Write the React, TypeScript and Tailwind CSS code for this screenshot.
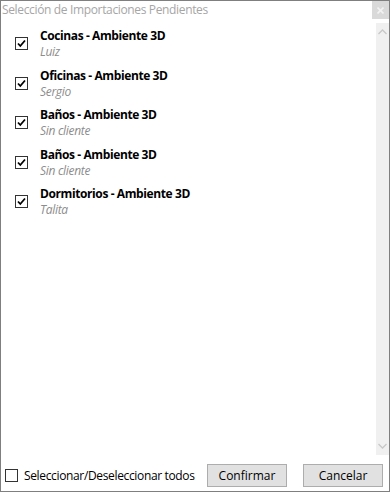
import React from "react";

const items = [
  { title: "Cocinas - Ambiente 3D", sub: "Luiz" },
  { title: "Oficinas - Ambiente 3D", sub: "Sergio" },
  { title: "Baños - Ambiente 3D", sub: "Sin cliente" },
  { title: "Baños - Ambiente 3D", sub: "Sin cliente" },
  { title: "Dormitorios - Ambiente 3D", sub: "Talita" },
];

function Check({ checked }: { checked: boolean }) {
  return (
    <div className="w-[13px] h-[13px] border border-[#333333] bg-white flex items-center justify-center shrink-0">
      {checked && (
        <svg width="11" height="11" viewBox="0 0 11 11">
          <path d="M2 5.5 L4.3 8 L9 2.5" stroke="#000" strokeWidth="1.8" fill="none" />
        </svg>
      )}
    </div>
  );
}

export default function App() {
  return (
    <div
      className="w-[390px] h-[492px] border border-[#7f7f7f] bg-white flex flex-col text-[12px]"
      style={{ fontFamily: '"Open Sans", "Noto Sans", sans-serif' }}
    >
      <div className="flex h-[18px] shrink-0">
        <div className="flex-1 pl-[1px] text-[#a6a6a6] leading-[18px] tracking-[-0.35px]">
          Selección de Importaciones Pendientes
        </div>
        <div className="w-[17px] h-[18px] bg-[#d9d9d9] flex items-center justify-center">
          <svg width="7" height="7" viewBox="0 0 7 7">
            <path d="M0.5 0.5 L6.5 6.5 M6.5 0.5 L0.5 6.5" stroke="#f2f2f2" strokeWidth="1.6" />
          </svg>
        </div>
      </div>
      <div className="flex flex-1 min-h-0 pt-[4px]">
        <div className="flex-1 pt-[1px]">
          {items.map((it, i) => (
            <div key={i} className="flex items-center h-[39.5px] pl-[14px]">
              <Check checked />
              <div className="ml-[12px] flex flex-col">
                <div className="font-bold text-black leading-[16px] tracking-[-0.4px]">{it.title}</div>
                <div className="italic text-[#8c8c8c] leading-[15px] tracking-[-0.3px]">{it.sub}</div>
              </div>
            </div>
          ))}
        </div>
        <div className="w-[13px] h-[432px] bg-[#f0f0f0] flex flex-col justify-between items-center py-[6px]">
          <svg width="9" height="6" viewBox="0 0 9 6">
            <path d="M0.5 5 L4.5 1 L8.5 5" stroke="#c8c8c8" strokeWidth="1.3" fill="none" />
          </svg>
          <svg width="9" height="6" viewBox="0 0 9 6">
            <path d="M0.5 1 L4.5 5 L8.5 1" stroke="#c8c8c8" strokeWidth="1.3" fill="none" />
          </svg>
        </div>
      </div>
      <div className="flex items-center h-[35px] shrink-0 pt-[4px]">
        <div className="ml-[4px]">
          <div className="w-[13px] h-[13px] border border-[#333333] bg-white" />
        </div>
        <div className="ml-[6px] text-black tracking-[-0.35px]">Seleccionar/Deseleccionar todos</div>
        <div className="flex-1" />
        <button className="w-[80px] h-[23px] bg-[#e1e1e1] border border-[#adadad] text-black">Confirmar</button>
        <button className="ml-[16px] mr-[6px] w-[80px] h-[23px] bg-[#e1e1e1] border border-[#adadad] text-black">Cancelar</button>
      </div>
    </div>
  );
}
